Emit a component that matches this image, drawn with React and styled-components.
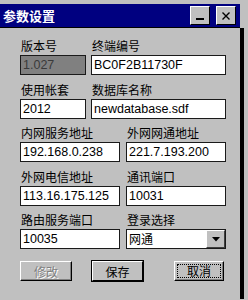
import React from 'react'
import styled, {createGlobalStyle} from 'styled-components'

const Global = createGlobalStyle`
	html, body {
		margin: 0;
		padding: 0;
		background: #c0c0c0;
		width: 248px;
		height: 300px;
		overflow: hidden;
	}
`

const Window = styled.div`
	width: 244px;
	padding-top: 4px;
	font-family: "Noto Sans CJK SC", "Liberation Sans", sans-serif;
`

const TitleBar = styled.div`
	width: 240px;
	height: 24px;
	background: #000080;
	display: flex;
	align-items: center;
	justify-content: space-between;
	padding: 0 4px 0 3px;
	box-sizing: border-box;
	border-bottom: 1px solid #000;
`

const Title = styled.span`
	color: #fff;
	font-size: 13px;
	font-weight: bold;
	letter-spacing: 0px;
`

const TitleButtons = styled.div`
	display: flex;
	gap: 6px;
	align-items: center;
`

const TitleButton = styled.div`
	width: 20px;
	height: 19px;
	box-sizing: border-box;
	background: #c0c0c0;
	border-top: 1px solid #fff;
	border-left: 1px solid #fff;
	border-right: 1px solid #000;
	border-bottom: 1px solid #000;
	display: flex;
	align-items: center;
	justify-content: center;
`

const Body = styled.div`
	width: 244px;
	height: 271px;
	box-sizing: border-box;
	border-right: 4px solid #000;
	padding: 10px 0 0 20px;
	background: #c0c0c0;
`

const Row = styled.div`
	display: grid;
	grid-template-columns: ${p => p.$narrow ? '66px 135px' : '100px 100px'};
	column-gap: ${p => p.$narrow ? '5px' : '6px'};
	margin-bottom: 6.5px;
`

const Cell = styled.div`
	display: flex;
	flex-direction: column;
`

const Label = styled.div`
	font-size: 12px;
	line-height: 16px;
	height: 16px;
	color: #000;
	padding-left: ${p => p.$indent || 1}px;
	white-space: nowrap;
	margin-bottom: 1px;
`

const Field = styled.div`
	height: 20px;
	box-sizing: border-box;
	border: 1px solid #1a1a1a;
	background: ${p => p.$disabled ? '#808080' : '#fff'};
	color: ${p => p.$disabled ? '#3a3a3a' : '#000'};
	font-family: "Liberation Sans", Arial, sans-serif;
	font-size: 12.5px;
	line-height: 18px;
	padding-left: 2px;
	white-space: nowrap;
	overflow: hidden;
`

const Combo = styled.div`
	height: 20px;
	box-sizing: border-box;
	border: 1px solid #1a1a1a;
	background: #fff;
	display: flex;
	align-items: stretch;
`

const ComboText = styled.div`
	flex: 1;
	font-size: 12px;
	line-height: 18px;
	padding-left: 2px;
`

const ComboButton = styled.div`
	width: 19px;
	box-sizing: border-box;
	background: #c0c0c0;
	border-top: 1px solid #fff;
	border-left: 1px solid #fff;
	border-right: 1px solid #404040;
	border-bottom: 1px solid #404040;
	display: flex;
	align-items: center;
	justify-content: center;
`

const Buttons = styled.div`
	display: flex;
	margin-top: 12px;
`

const Button = styled.div`
	width: ${p => p.$w}px;
	height: 20px;
	margin-right: ${p => p.$gap || 0}px;
	box-sizing: border-box;
	background: #c0c0c0;
	border-top: 1px solid #fff;
	border-left: 1px solid #fff;
	border-right: 1px solid #000;
	border-bottom: 1px solid #000;
	box-shadow: ${p => p.$strong ? '0 0 0 1px #000' : 'inset -1px -1px 0 #808080'};
	font-size: 12px;
	color: ${p => p.$disabled ? '#808080' : '#000'};
	text-shadow: ${p => p.$disabled ? '1px 1px 0 #fff' : 'none'};
	display: flex;
	align-items: center;
	justify-content: center;
	padding: 2px;
`

const Focus = styled.span`
	flex: 1;
	align-self: stretch;
	border: 1px dotted #000;
	display: flex;
	align-items: center;
	justify-content: center;
	line-height: 12px;
`

const App = () => (
	<>
		<Global />
		<Window>
			<TitleBar>
				<Title>参数设置</Title>
				<TitleButtons>
					<TitleButton>
						<svg width="10" height="10" viewBox="0 0 10 10"><rect x="1" y="7" width="8" height="2" fill="#000" /></svg>
					</TitleButton>
					<TitleButton>
						<svg width="10" height="10" viewBox="0 0 10 10"><path d="M1.5 1.5 L8.5 8.5 M8.5 1.5 L1.5 8.5" stroke="#000" strokeWidth="1.4" /></svg>
					</TitleButton>
				</TitleButtons>
			</TitleBar>
			<Body>
				<Row $narrow>
					<Cell><Label>版本号</Label><Field $disabled>1.027</Field></Cell>
					<Cell><Label>终端编号</Label><Field>BC0F2B11730F</Field></Cell>
				</Row>
				<Row $narrow>
					<Cell><Label>使用帐套</Label><Field>2012</Field></Cell>
					<Cell><Label>数据库名称</Label><Field>newdatabase.sdf</Field></Cell>
				</Row>
				<Row>
					<Cell><Label>内网服务地址</Label><Field>192.168.0.238</Field></Cell>
					<Cell><Label>外网网通地址</Label><Field>221.7.193.200</Field></Cell>
				</Row>
				<Row>
					<Cell><Label>外网电信地址</Label><Field>113.16.175.125</Field></Cell>
					<Cell><Label>通讯端口</Label><Field>10031</Field></Cell>
				</Row>
				<Row>
					<Cell><Label>路由服务端口</Label><Field>10035</Field></Cell>
					<Cell>
						<Label>登录选择</Label>
						<Combo>
							<ComboText>网通</ComboText>
							<ComboButton>
								<svg width="8" height="5" viewBox="0 0 8 5"><path d="M0 0 H8 L4 4.5 Z" fill="#000" /></svg>
							</ComboButton>
						</Combo>
					</Cell>
				</Row>
				<Buttons>
					<Button $w={52} $gap={20} $disabled>修改</Button>
					<Button $w={51} $gap={31} $strong>保存</Button>
					<Button $w={50}><Focus>取消</Focus></Button>
				</Buttons>
			</Body>
		</Window>
	</>
)

export default App
